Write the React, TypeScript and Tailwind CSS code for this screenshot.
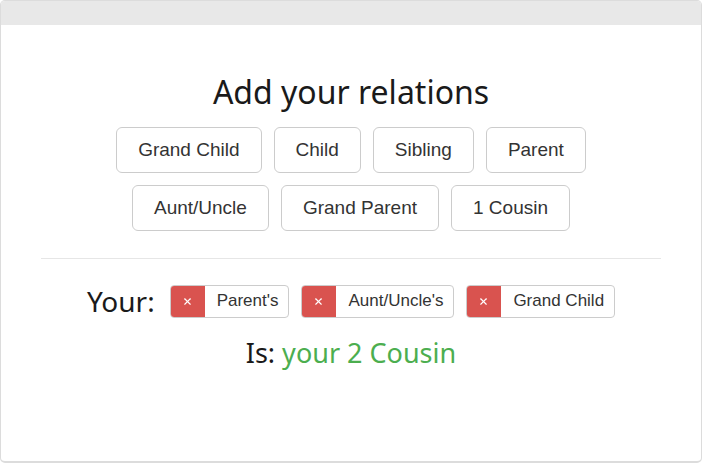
import { X } from "lucide-react";

const choices = [
  ["Grand Child", "Child", "Sibling", "Parent"],
  ["Aunt/Uncle", "Grand Parent", "1 Cousin"],
];

const chain = ["Parent's", "Aunt/Uncle's", "Grand Child"];

export default function App() {
  return (
    <div className="w-[702px] h-[463px] bg-white">
      <div className="h-[463px] flex flex-col rounded-[5px] border border-[#dcdcdc] border-b-2 overflow-hidden bg-white">
        <div className="h-[24px] bg-[#e8e8e8] shrink-0" />
        <div className="flex flex-col items-center px-10 pt-[47px] text-[#222]">
          <h1 className="font-['Noto_Sans',sans-serif] text-[32px] leading-[40px] text-[#1a1a1a]">
            Add your relations
          </h1>
          <div className="mt-[15px] flex flex-col items-center gap-3 font-['Liberation_Sans',Arial,sans-serif]">
            {choices.map((row, i) => (
              <div key={i} className="flex gap-3">
                {row.map((label) => (
                  <button
                    key={label}
                    className="px-[21px] py-[10px] text-[19px] leading-6 text-[#333] bg-white border border-[#ccc] rounded-[6px]"
                  >
                    {label}
                  </button>
                ))}
              </div>
            ))}
          </div>
          <hr className="w-full mt-[27px] border-t border-[#e6e6e6]" />
          <div className="mt-[24px] flex items-center">
            <span className="font-['Noto_Sans',sans-serif] text-[28px] leading-9 text-[#1a1a1a] mr-[15px]">
              Your:
            </span>
            <div className="flex gap-3 font-['Liberation_Sans',Arial,sans-serif]">
              {chain.map((label) => (
                <div key={label} className="flex h-[33px] rounded-[4px] border border-[#ccc] overflow-hidden">
                  <span className="w-[35px] -my-px -ml-px flex items-center justify-center bg-[#d9534f] text-white rounded-l-[4px]">
                    <X size={11} strokeWidth={2.5} />
                  </span>
                  <span className="pl-[12px] pr-[10px] flex items-center text-[17px] text-[#333]">
                    {label}
                  </span>
                </div>
              ))}
            </div>
          </div>
          <p className="mt-[16px] font-['Noto_Sans',sans-serif] text-[27px] leading-9 text-[#1a1a1a]">
            Is: <span className="text-[#4cae4f]">your 2 Cousin</span>
          </p>
        </div>
      </div>
    </div>
  );
}
